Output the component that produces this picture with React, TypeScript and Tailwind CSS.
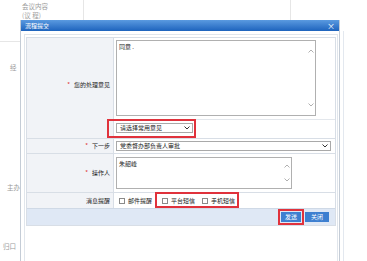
import React from "react";

const Chevron = ({ up = false, className = "" }: { up?: boolean; className?: string }) => (
  <svg width="6" height="4" viewBox="0 0 6 4" className={className}>
    <path d={up ? "M0.5 3.5 L3 1 L5.5 3.5" : "M0.5 0.5 L3 3 L5.5 0.5"} fill="none" stroke="currentColor" strokeWidth="1" />
  </svg>
);

const Check = ({ label }: { label: string }) => (
  <div className="flex items-center gap-[3px]">
    <div className="w-[6px] h-[6px] border border-[#8a8a8a] bg-white" />
    <span>{label}</span>
  </div>
);

export default function App() {
  return (
    <div className="relative w-[367px] h-[261px] overflow-hidden bg-white font-['Noto_Sans_CJK_SC','Noto_Sans',sans-serif] text-[6px] leading-none text-[#222]">
      {/* background page */}
      <div className="absolute left-[22px] top-[3px] text-[#9a9a9a] text-[6.5px] leading-[7px]">会议内容</div>
      <div className="absolute left-[22px] top-[12px] text-[#9a9a9a] text-[6.5px] leading-[7px]">(议 程)</div>
      <div className="absolute left-[83px] top-0 h-[20px] w-px bg-[#e6e6e6]" />
      <div className="absolute left-[290px] top-0 h-[20px] w-px bg-[#e6e6e6]" />
      <div className="absolute left-0 top-[41px] w-[20px] h-px bg-[#e6e6e6]" />
      <div className="absolute left-[343px] top-[31px] h-[230px] w-px bg-[#e3e8ef]" />
      <div className="absolute left-[10px] top-[64px] text-[#9a9a9a] text-[6.5px]">经</div>
      <div className="absolute left-[7px] top-[184px] text-[#9a9a9a] text-[6.5px]">主办</div>
      <div className="absolute left-[3px] top-[243px] text-[#9a9a9a] text-[6.5px]">归口</div>

      {/* dialog */}
      <div className="absolute left-[20px] top-[20px] w-[320px] h-[241px] bg-white border-l border-r border-[#c4ccd6] flex flex-col">
        <div className="h-[11px] bg-gradient-to-b from-[#5a9ae0] to-[#1c63bd] flex items-center justify-between pl-[4px] pr-[4px] text-white shrink-0">
          <span className="text-[6px]">流程提交</span>
          <span className="text-[8px] leading-none">×</span>
        </div>
        <div className="flex-1 pt-[3px] pl-[3px] pr-[1px]">
          <div className="h-full border-t border-l border-r border-[#e1e6ec] pt-[2px] pl-[1px]">
            <div className="w-[310px] border border-[#d8dee6]">
              {/* row 1 */}
              <div className="grid grid-cols-[87px_1fr] h-[100px]">
                <div className="bg-[#f1f3f7] border-r border-[#d8dee6] flex items-center justify-end pr-[3px] pb-[6px]">
                  <span className="text-[#e0302f] mr-[4px]">*</span>
                  <span>您的处理意见</span>
                </div>
                <div className="flex flex-col">
                  <div className="h-[82px] border-b border-[#e3e7ec] pt-[2px] pl-[2px]">
                    <div className="w-[200px] h-[76px] border border-[#b0b0b0] flex">
                      <div className="flex-1 pl-[2px] pt-[3px]">同意 .</div>
                      <div className="w-[8px] flex flex-col justify-between items-center py-[8px] text-[#b0b0b0]">
                        <Chevron up />
                        <Chevron />
                      </div>
                    </div>
                  </div>
                  <div className="relative flex-1 pl-[2px] pt-[3px]">
                    <div className="w-[77px] h-[10px] border border-[#a9a9a9] bg-white flex items-center justify-between pl-[3px] pr-[2px]">
                      <span>请选择常用意见</span>
                      <Chevron className="text-[#333]" />
                    </div>
                    <div className="absolute left-[-7px] top-[-1px] w-[89px] h-[19px] border-2 border-[#e0323c]" />
                  </div>
                </div>
              </div>
              {/* row 2 */}
              <div className="grid grid-cols-[87px_1fr] h-[15px] border-t border-[#d8dee6]">
                <div className="bg-[#f1f3f7] border-r border-[#d8dee6] flex items-center justify-end pr-[3px]">
                  <span className="text-[#e0302f] mr-[4px]">*</span>
                  <span>下一步</span>
                </div>
                <div className="pl-[2px] pt-[2px]">
                  <div className="w-[215px] h-[10px] border border-[#a9a9a9] bg-white flex items-center justify-between pl-[3px] pr-[2px]">
                    <span>党委督办部负责人审批</span>
                    <Chevron className="text-[#333]" />
                  </div>
                </div>
              </div>
              {/* row 3 */}
              <div className="grid grid-cols-[87px_1fr] h-[39px] border-t border-[#d8dee6]">
                <div className="bg-[#f1f3f7] border-r border-[#d8dee6] flex items-center justify-end pr-[3px]">
                  <span className="text-[#e0302f] mr-[4px]">*</span>
                  <span>操作人</span>
                </div>
                <div className="pl-[2px] pt-[3px]">
                  <div className="w-[176px] h-[32px] border border-[#b0b0b0] flex">
                    <div className="flex-1 pl-[2px] pt-[3px]">朱韶峰</div>
                    <div className="w-[8px] flex flex-col justify-between items-center py-[6px] text-[#b0b0b0]">
                      <Chevron up />
                      <Chevron />
                    </div>
                  </div>
                </div>
              </div>
              {/* row 4 */}
              <div className="grid grid-cols-[87px_1fr] h-[16px] border-t border-[#d8dee6]">
                <div className="bg-[#f1f3f7] border-r border-[#d8dee6] flex items-center justify-end pr-[3px]">
                  <span>消息提醒</span>
                </div>
                <div className="flex items-center pl-[5px] gap-[7px]">
                  <Check label="邮件提醒" />
                  <div className="relative flex items-center gap-[7px] pl-[3px]">
                    <Check label="平台短信" />
                    <Check label="手机短信" />
                    <div className="absolute left-[-4px] top-[-6px] w-[84px] h-[16px] border-2 border-[#e0323c]" />
                  </div>
                </div>
              </div>
              {/* footer */}
              <div className="h-[17px] border-t border-[#cfd9e6] bg-[#dfe8f5] flex items-center justify-end pr-[6px] gap-[4px]">
                <div className="relative">
                  <div className="w-[20px] h-[10px] bg-[#3d7fd0] text-white flex items-center justify-center">发送</div>
                  <div className="absolute left-[-3px] top-[-3px] w-[26px] h-[16px] border-2 border-[#e0323c]" />
                </div>
                <div className="w-[24px] h-[10px] bg-[#3d7fd0] text-white flex items-center justify-center">关闭</div>
              </div>
            </div>
          </div>
        </div>
      </div>
    </div>
  );
}
